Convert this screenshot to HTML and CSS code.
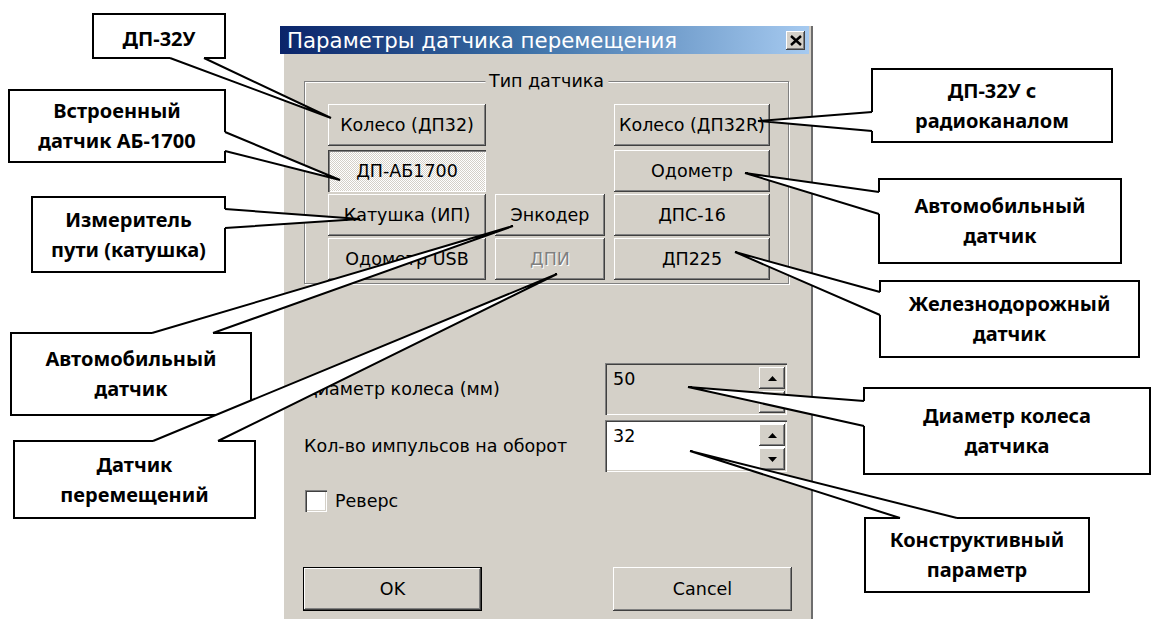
FILE: index.html
```html
<!DOCTYPE html>
<html lang="ru">
<head>
<meta charset="utf-8">
<title>Параметры датчика перемещения</title>
<link rel="stylesheet" href="styles.css">
</head>
<body>
<div class="window">
  <div class="titlebar">
    <span class="title">Параметры датчика перемещения</span>
    <span class="close-btn">
      <svg width="12" height="11" viewBox="0 0 12 11"><path d="M1 1 L11 10 M11 1 L1 10" stroke="#000" stroke-width="2.4"/></svg>
    </span>
  </div>
  <div class="client">
    <div class="group">
      <span class="group-caption">Тип датчика</span>
      <div class="sensor-grid">
        <button class="btn col-a">Колесо (ДП32)</button>
        <button class="btn col-c">Колесо (ДП32R)</button>
        <button class="btn col-a pressed">ДП-АБ1700</button>
        <button class="btn col-c">Одометр</button>
        <button class="btn col-a">Катушка (ИП)</button>
        <button class="btn col-b">Энкодер</button>
        <button class="btn col-c">ДПС-16</button>
        <button class="btn col-a">Одометр USB</button>
        <button class="btn col-b disabled">ДПИ</button>
        <button class="btn col-c">ДП225</button>
      </div>
    </div>

    <div class="params">
      <div class="param">
        <span class="param-label">Диаметр колеса (мм)</span>
        <div class="spin readonly">
          <span class="spin-value">50</span>
          <div class="spin-btns">
            <span class="spin-btn"><svg width="9" height="5" viewBox="0 0 9 5"><path d="M0 5 L4.5 0 L9 5Z" fill="#000"/></svg></span>
            <span class="spin-btn"><svg width="9" height="5" viewBox="0 0 9 5"><path d="M0 0 L9 0 L4.5 5Z" fill="#000"/></svg></span>
          </div>
        </div>
      </div>
      <div class="param">
        <span class="param-label">Кол-во импульсов на оборот</span>
        <div class="spin">
          <span class="spin-value">32</span>
          <div class="spin-btns">
            <span class="spin-btn"><svg width="9" height="5" viewBox="0 0 9 5"><path d="M0 5 L4.5 0 L9 5Z" fill="#000"/></svg></span>
            <span class="spin-btn"><svg width="9" height="5" viewBox="0 0 9 5"><path d="M0 0 L9 0 L4.5 5Z" fill="#000"/></svg></span>
          </div>
        </div>
      </div>
    </div>

    <label class="check">
      <span class="check-box"></span>
      <span>Реверс</span>
    </label>

    <div class="actions">
      <button class="btn action default">OK</button>
      <button class="btn action">Cancel</button>
    </div>
  </div>
</div>

<div class="note n1"><span>ДП-32У</span></div>
<div class="note n2"><span>Встроенный<br>датчик АБ-1700</span></div>
<div class="note n3"><span>Измеритель<br>пути (катушка)</span></div>
<div class="note n4"><span>Автомобильный<br>датчик</span></div>
<div class="note n5"><span>Датчик<br>перемещений</span></div>
<div class="note n6"><span>ДП-32У с<br>радиоканалом</span></div>
<div class="note n7"><span>Автомобильный<br>датчик</span></div>
<div class="note n8"><span>Железнодорожный<br>датчик</span></div>
<div class="note n9"><span>Диаметр колеса<br>датчика</span></div>
<div class="note n10"><span>Конструктивный<br>параметр</span></div>

<svg class="pointers" width="1152" height="619" viewBox="0 0 1152 619">
  <!-- each pointer: white wedge that opens the note's edge, then its two outline strokes -->
  <polygon class="wedge" points="331,118 170,58 170,54 204,54 204,58"/>
  <polyline class="edge" points="170,58 331,118 204,58"/>

  <polygon class="wedge" points="340,180 225,132 221,132 221,151 225,151"/>
  <polyline class="edge" points="225,132 340,180 225,151"/>

  <polygon class="wedge" points="360,219 225,209 221,209 221,228 225,228"/>
  <polyline class="edge" points="225,209 360,219 225,228"/>

  <polygon class="wedge" points="513,226 152,333 152,337 213,337 213,333"/>
  <polyline class="edge" points="152,333 513,226 213,333"/>

  <polygon class="wedge" points="557,274 153,441 153,445 218,445 218,441"/>
  <polyline class="edge" points="153,441 557,274 218,441"/>

  <polygon class="wedge" points="758,121 872,112 876,112 876,131 872,131"/>
  <polyline class="edge" points="872,112 758,121 872,131"/>

  <polygon class="wedge" points="745,173 879,192 883,192 883,214 879,214"/>
  <polyline class="edge" points="879,192 745,173 879,214"/>

  <polygon class="wedge" points="735,252 880,292 884,292 884,315 880,315"/>
  <polyline class="edge" points="880,292 735,252 880,315"/>

  <polygon class="wedge" points="688,387 864,401 868,401 868,426 864,426"/>
  <polyline class="edge" points="864,401 688,387 864,426"/>

  <polygon class="wedge" points="690,451 900,518 900,522 957,522 957,518"/>
  <polyline class="edge" points="900,518 690,451 957,518"/>
</svg>
</body>
</html>
```

FILE: styles.css
```css
html, body {
  margin: 0;
  padding: 0;
}

body {
  position: relative;
  width: 1152px;
  height: 619px;
  overflow: hidden;
  background: #fff;
  font-family: "DejaVu Sans", Tahoma, sans-serif;
  font-size: 17.5px;
  color: #000;
}

/* ---------- dialog window ---------- */
.window {
  position: absolute;
  left: 280px;
  top: 26px;
  width: 531px;
  height: 610px;
  border-right: 2px solid #6d6d6d;
  display: flex;
  flex-direction: column;
  background: linear-gradient(90deg, transparent 4px, #d4d0c8 4px);
}

.titlebar {
  height: 28px;
  margin-right: 2px;
  padding: 0 4px 0 7px;
  display: flex;
  align-items: center;
  justify-content: space-between;
  background: linear-gradient(90deg, #0a246a 0%, #3a6ea5 45%, #a6caf0 100%);
}

.title {
  color: #fff;
  font-size: 21.3px;
  white-space: nowrap;
}

.close-btn {
  width: 19px;
  height: 19px;
  display: flex;
  align-items: center;
  justify-content: center;
  background: #d4d0c8;
  box-shadow: inset -1px -1px #404040, inset 1px 1px #fff, inset -2px -2px #808080;
}

.client {
  flex: 1;
  margin-left: 4px;
  padding: 27px 0 0 20px;
  background: #d4d0c8;
}

/* ---------- buttons ---------- */
.btn {
  font-family: inherit;
  font-size: 17.5px;
  color: #000;
  background: #d4d0c8;
  border: 0;
  padding: 0;
  margin: 0;
  height: 42px;
  box-shadow: inset -1px -1px #404040, inset 1px 1px #fff,
              inset -2px -2px #808080, inset 2px 2px #d4d0c8;
}

.btn.pressed {
  background: repeating-conic-gradient(#fff 0 25%, #d4d0c8 0 50%) 0 0 / 2px 2px;
  box-shadow: inset 1px 1px #404040, inset 2px 2px #808080,
              inset -1px -1px #fff;
}

.btn.disabled {
  color: #808080;
  text-shadow: 1px 1px #fff;
}

/* ---------- sensor type group ---------- */
.group {
  position: relative;
  width: 485px;
  box-sizing: border-box;
  border: 1px solid #808080;
  box-shadow: inset 1px 1px #fff, 1px 1px #fff;
  padding: 22px 0 3px 23px;
}

.group-caption {
  position: absolute;
  top: -11px;
  left: 50%;
  transform: translateX(-50%);
  padding: 0 4px;
  line-height: 20px;
  background: #d4d0c8;
  white-space: nowrap;
}

.sensor-grid {
  display: grid;
  grid-template-columns: 158px 110px 156px;
  grid-template-rows: 44px 42px 42px 42px;
  column-gap: 9px;
  row-gap: 2px;
  align-items: start;
}

.col-a { grid-column: 1; }
.col-b { grid-column: 2; }
.col-c { grid-column: 3; }

/* ---------- numeric parameters ---------- */
.params {
  margin-top: 79px;
  display: flex;
  flex-direction: column;
  gap: 5px;
}

.param {
  display: flex;
  align-items: center;
  height: 52px;
}

.param-label {
  width: 301px;
  white-space: nowrap;
}

.spin {
  width: 182px;
  height: 52px;
  box-sizing: border-box;
  display: flex;
  justify-content: space-between;
  background: #fff;
  box-shadow: inset 1px 1px #808080, inset 2px 2px #404040,
              inset -1px -1px #fff, inset -2px -2px #d4d0c8;
}

.spin.readonly {
  background: #d4d0c8;
}

.spin-value {
  padding: 6px 0 0 8px;
  line-height: 20px;
}

.spin-btns {
  display: flex;
  flex-direction: column;
  gap: 2px;
  padding: 4px 2px 2px 0;
}

.spin-btn {
  width: 26px;
  height: 22px;
  display: flex;
  align-items: center;
  justify-content: center;
  background: #d4d0c8;
  box-shadow: inset -1px -1px #404040, inset 1px 1px #fff, inset -2px -2px #808080;
}

/* ---------- checkbox ---------- */
.check {
  margin-top: 18px;
  display: flex;
  align-items: center;
  gap: 8px;
  height: 22px;
}

.check-box {
  width: 22px;
  height: 22px;
  margin-left: 1px;
  box-sizing: border-box;
  background: #fff;
  box-shadow: inset 1px 1px #808080, inset 2px 2px #404040,
              inset -1px -1px #fff, inset -2px -2px #d4d0c8;
}

/* ---------- dialog actions ---------- */
.actions {
  margin: 55px 0 0 -1px;
  width: 489px;
  display: flex;
  justify-content: space-between;
}

.btn.action {
  width: 179px;
  height: 44px;
}

.btn.default {
  box-shadow: inset 0 0 0 1px #000, inset -2px -2px #404040,
              inset 2px 2px #fff, inset -3px -3px #808080;
}

/* ---------- annotation notes ---------- */
.note {
  position: absolute;
  box-sizing: border-box;
  border: 2px solid #000;
  background: #fff;
  display: flex;
  align-items: center;
  justify-content: center;
  text-align: center;
  font-family: "Noto Sans", "Open Sans", sans-serif;
  font-weight: bold;
  font-size: 20px;
  line-height: 30px;
  color: #000;
  white-space: nowrap;
}

.n1  { left: 92px;  top: 13px;  width: 134px; height: 46px; padding-top: 6px; }
.n2  { left: 8px;   top: 89px;  width: 218px; height: 74px; }
.n3  { left: 31px;  top: 196px; width: 195px; height: 77px; }
.n4  { left: 10px;  top: 332px; width: 242px; height: 84px; }
.n5  { left: 13px;  top: 440px; width: 243px; height: 79px; }
.n6  { left: 871px; top: 68px;  width: 242px; height: 75px; }
.n7  { left: 878px; top: 178px; width: 244px; height: 86px; }
.n8  { left: 879px; top: 280px; width: 261px; height: 78px; }
.n9  { left: 863px; top: 387px; width: 288px; height: 88px; }
.n10 { left: 864px; top: 517px; width: 226px; height: 76px; }

.pointers {
  position: absolute;
  left: 0;
  top: 0;
  pointer-events: none;
}

.wedge {
  fill: #fff;
  stroke: none;
}

.edge {
  fill: none;
  stroke: #000;
  stroke-width: 2;
  stroke-linejoin: miter;
}
```
